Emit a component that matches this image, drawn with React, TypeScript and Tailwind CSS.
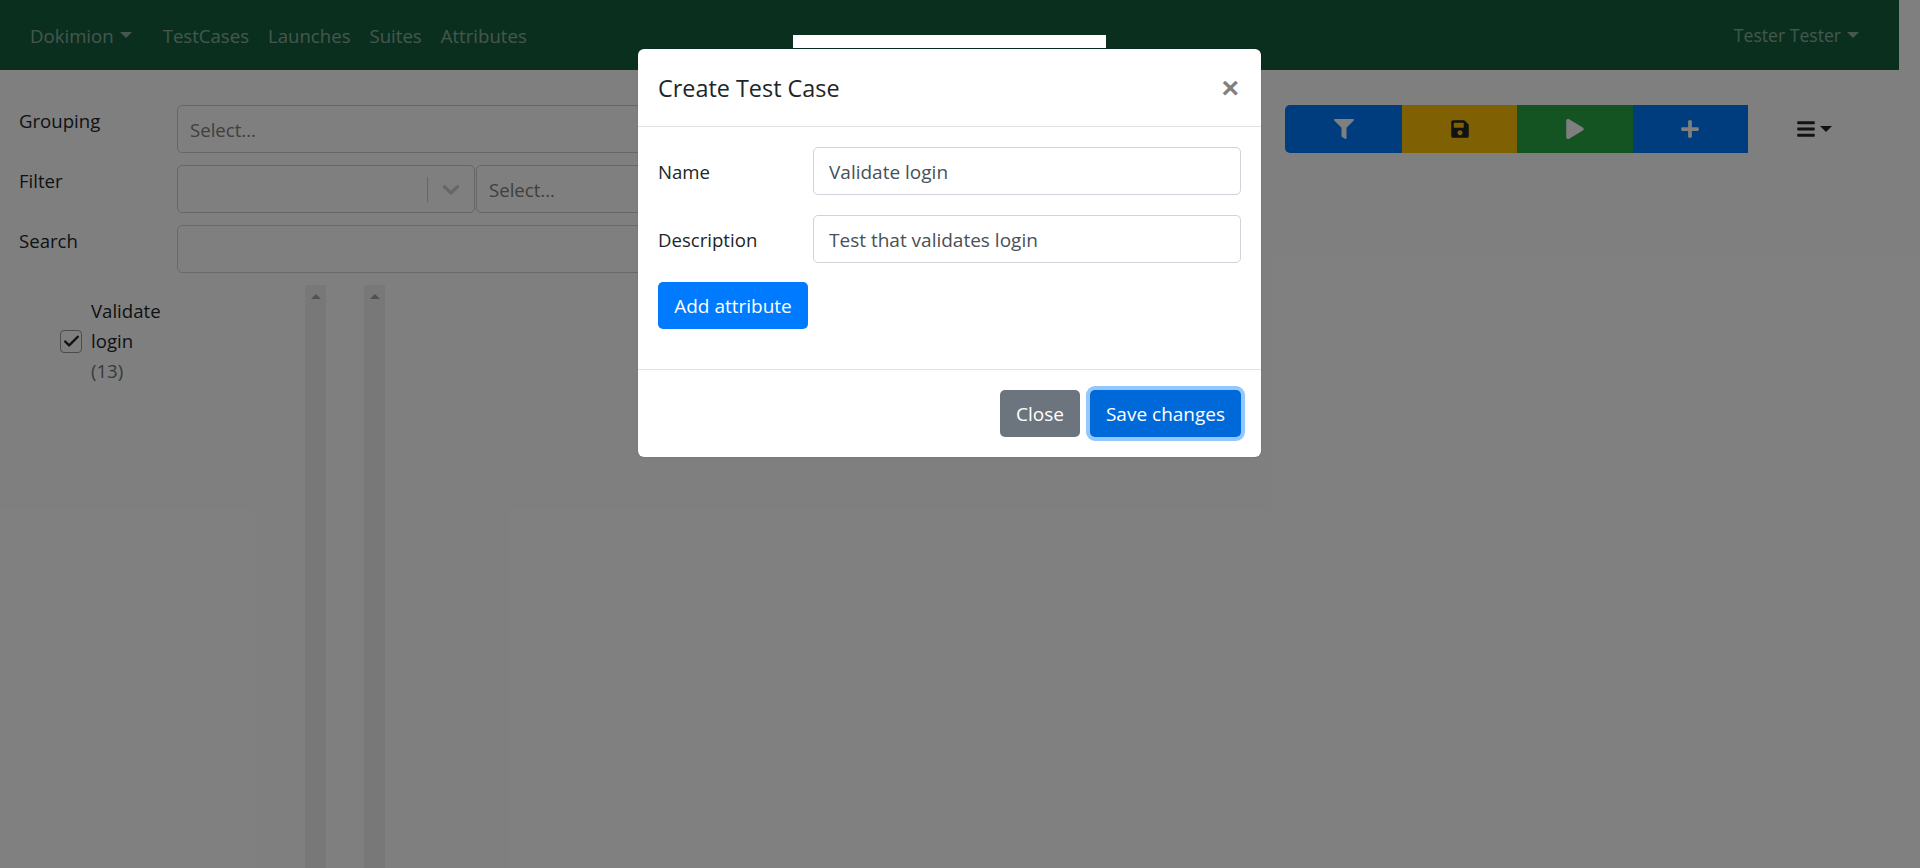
import { Check } from "lucide-react";
import { FaBars, FaFilter, FaPlay, FaPlus, FaSave } from "react-icons/fa";

const navLinks = ["TestCases", "Launches", "Suites", "Attributes"];

function Caret({ className = "" }: { className?: string }) {
  return <span className={`inline-block border-x-[6px] border-t-[6px] border-x-transparent border-t-current ${className}`} />;
}

function Scrollbar() {
  return (
    <div className="flex h-full w-[21px] justify-center bg-[#f1f1f1] pt-[9px]">
      <span className="h-0 w-0 border-x-[5px] border-b-[5px] border-x-transparent border-b-[#a3a3a3]" />
    </div>
  );
}

function Field({ label, children }: { label: string; children: React.ReactNode }) {
  return (
    <div className="flex items-start">
      <div className="w-[158px] pt-[1px] leading-[30px] text-[#212529]">{label}</div>
      <div className="flex flex-1">{children}</div>
    </div>
  );
}

function SelectBox({ text, className = "" }: { text?: string; className?: string }) {
  return (
    <div className={`flex h-[48px] items-center rounded-[5px] border border-[#cccccc] bg-white pl-[12px] pt-[2px] text-[#808080] ${className}`}>
      {text}
    </div>
  );
}

function ModalInput({ label, value }: { label: string; value: string }) {
  return (
    <div className="flex items-center">
      <div className="w-[155px] pt-[1px] text-[#212529]">{label}</div>
      <input
        readOnly
        value={value}
        className="h-[48px] flex-1 rounded-[5px] border border-[#ced4da] bg-white px-[15px] pt-[1px] text-[19px] text-[#495057] outline-none"
      />
    </div>
  );
}

export default function App() {
  return (
    <div className="relative h-[868px] w-full overflow-hidden bg-white pr-[21px] font-['Open_Sans',sans-serif] text-[18.6px]">
      <nav className="flex h-[70px] items-center justify-between bg-[#145e3c] px-[20px] pt-[1px] text-white/50">
        <div className="flex items-center">
          <a className="flex items-center gap-[6px] px-[10px]">
            Dokimion <Caret />
          </a>
          <div className="ml-[11.5px] flex">
            {navLinks.map((link) => (
              <a className="px-[9.5px]" key={link}>{link}</a>
            ))}
          </div>
        </div>
        <a className="flex items-center gap-[6px] px-[20px] text-[17.6px]">
          Tester Tester <Caret />
        </a>
      </nav>

      <div className="flex h-[798px] pt-[35px]">
        <div className="flex w-[1243px] flex-col pl-[19px]">
          <div className="flex flex-col gap-[12px]">
            <Field label="Grouping">
              <SelectBox text="Select..." className="flex-1" />
            </Field>
            <Field label="Filter">
              <div className="flex h-[48px] w-[298px] items-center justify-end rounded-[5px] border border-[#cccccc] bg-white">
                <span className="h-[25px] w-px bg-[#cccccc]" />
                <svg viewBox="0 0 20 20" className="mx-[9px] h-[28px] w-[28px] fill-[#cccccc]">
                  <path d="M4.516 7.548c0.436-0.446 1.043-0.481 1.576 0l3.908 3.747 3.908-3.747c0.533-0.481 1.141-0.446 1.574 0 0.436 0.445 0.408 1.197 0 1.615-0.406 0.418-4.695 4.502-4.695 4.502-0.217 0.223-0.502 0.335-0.787 0.335s-0.57-0.112-0.789-0.335c0 0-4.287-4.084-4.695-4.502s-0.436-1.17 0-1.615z" />
                </svg>
              </div>
              <SelectBox text="Select..." className="ml-px flex-1" />
            </Field>
            <Field label="Search">
              <div className="h-[48px] flex-1 rounded-[5px] border border-[#ced4da] bg-white" />
            </Field>
          </div>
          <div className="mt-[12px] flex min-h-0 flex-1">
            <div className="flex w-[286px] items-start pl-[41px] pt-[11px]">
              <div className="flex h-[90px] items-center">
                <span className="flex h-[23px] w-[22px] items-center justify-center rounded-[4px] border border-[#999999] bg-white text-[#212529]">
                  <Check size={19} strokeWidth={3} />
                </span>
              </div>
              <div className="ml-[9px] w-[70px] leading-[30px] text-[#212529]">
                Validate login <span className="text-[#6c757d]">(13)</span>
              </div>
            </div>
            <Scrollbar />
            <div className="w-[38px]" />
            <Scrollbar />
          </div>
        </div>
        <div className="flex items-start pl-[42px]">
          <div className="flex h-[48px] w-[463px] text-white">
            <button className="flex w-[117px] items-center justify-center rounded-l-[5px] bg-[#007bff]"><FaFilter size={20} /></button>
            <button className="flex flex-1 items-center justify-center bg-[#ffc107] text-[#212529]"><FaSave size={20} /></button>
            <button className="flex flex-1 items-center justify-center bg-[#28a745]"><FaPlay size={20} /></button>
            <button className="flex flex-1 items-center justify-center bg-[#007bff]"><FaPlus size={20} /></button>
          </div>
          <button className="ml-[48px] flex h-[48px] items-center gap-[4px] text-[#212529]">
            <FaBars size={20} /> <Caret />
          </button>
        </div>
      </div>

      <div className="absolute inset-0 bg-black/50" />
      <div className="absolute left-[793px] top-[35px] h-[13px] w-[313px] bg-white" />

      <div className="absolute left-[638px] top-[49px] w-[623px] rounded-[6px] bg-white shadow-[0_0_1px_rgba(0,0,0,0.4)]">
        <div className="flex h-[78px] items-center justify-between border-b border-[#dee2e6] pl-[20px] pr-[22px]">
          <h5 className="pt-[2px] text-[23.4px] font-medium text-[#212529]">Create Test Case</h5>
          <span className="font-['Liberation_Sans',sans-serif] text-[30px] font-bold leading-none text-[#808080]">×</span>
        </div>
        <div className="flex h-[242px] flex-col items-start px-[20px] pt-[20px]">
          <div className="flex w-full flex-col gap-[20px]">
            <ModalInput label="Name" value="Validate login" />
            <ModalInput label="Description" value="Test that validates login" />
          </div>
          <button className="mt-[19px] h-[47px] w-[150px] rounded-[5px] bg-[#007bff] pt-[2px] text-[19px] text-white">Add attribute</button>
        </div>
        <div className="flex h-[88px] items-center justify-end gap-[10px] border-t border-[#dee2e6] px-[20px]">
          <button className="h-[47px] w-[80px] rounded-[5px] bg-[#6c757d] pt-[2px] text-[19px] text-white">Close</button>
          <button className="h-[47px] w-[151px] rounded-[5px] bg-[#0069d9] pt-[2px] text-[19px] text-white shadow-[0_0_0_4px_rgba(38,143,255,0.5)]">Save changes</button>
        </div>
      </div>
    </div>
  );
}
